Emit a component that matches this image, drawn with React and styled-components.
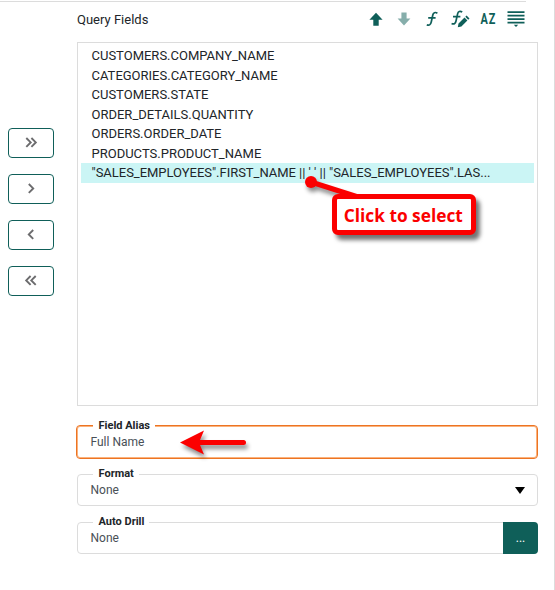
import React from "react";
import styled, { createGlobalStyle } from "styled-components";

const TEAL = "#0f5f59";
const LINE = "#dcdcdc";
const RED = "#fb0000";

const GlobalStyle = createGlobalStyle`
  * { box-sizing: border-box; }
  body { margin: 0; background: #fff; }
  button { font-family: inherit; padding: 0; }
`;

const Page = styled.main`
  position: relative;
  display: grid;
  grid-template-columns: 77px 461px;
  width: 555px;
  height: 590px;
  overflow: hidden;
  border-right: 1px solid ${LINE};
  font-family: Roboto, "Liberation Sans", sans-serif;
  font-size: 13px;
  color: #212529;
`;

const TopRule = styled.hr`
  position: absolute;
  top: 1px;
  left: 0;
  width: 526px;
  height: 1px;
  margin: 0;
  border: 0;
  background: ${LINE};
`;

const MoveColumn = styled.div`
  display: flex;
  flex-direction: column;
  gap: 16px;
  padding: 128px 0 0 8px;
`;

const MoveButton = styled.button`
  display: flex;
  align-items: center;
  justify-content: center;
  width: 46px;
  height: 30px;
  border: 1px solid ${TEAL};
  border-radius: 4px;
  background: #fff;
  color: #6c6c6e;
`;

const Panel = styled.section`
  display: flex;
  flex-direction: column;
`;

const Header = styled.header`
  display: flex;
  justify-content: space-between;
  height: 42px;
  padding: 9px 12px 0 0;
`;

const Title = styled.h1`
  margin: 0;
  padding-top: 1px;
  font-size: 13px;
  font-weight: 400;
  line-height: 20px;
`;

const Toolbar = styled.div`
  display: flex;
  gap: 8px;
`;

const Tool = styled.button`
  width: 20px;
  height: 20px;
  border: 0;
  background: none;
  color: ${TEAL};
  opacity: ${(p) => (p.$dim ? 0.5 : 1)};
  svg { display: block; overflow: visible; }
`;

const FieldList = styled.ul`
  height: 364px;
  margin: 0 0 20px;
  padding: 3px;
  border: 1px solid ${LINE};
  list-style: none;
`;

const FieldRow = styled.li`
  height: 19.5px;
  padding-left: 10.5px;
  line-height: 19.5px;
  white-space: pre;
  letter-spacing: ${(p) => (p.$selected ? "-0.025px" : "normal")};
  background: ${(p) => (p.$selected ? "#cbf5f5" : "transparent")};
`;

const Field = styled.div`
  position: relative;
  display: flex;
  align-items: center;
  justify-content: space-between;
  height: 32px;
  margin-bottom: 16px;
  border: 1px solid ${LINE};
  border-radius: 4px;
  padding-left: 12.5px;
  font-size: 12px;
  color: #495057;
  ${(p) => p.$focused && `
    height: 34px;
    margin: -1px 0 15px -1px;
    padding-left: 13.5px;
    border-color: #ec7423;
    box-shadow: inset 0 0 0 1px #fbb27c;
  `}
`;

const Label = styled.label`
  position: absolute;
  top: ${(p) => (p.$focused ? "-7px" : "-8px")};
  left: ${(p) => (p.$focused ? "16px" : "15px")};
  padding: 0 5px 0 5.5px;
  background: #fff;
  font-size: 11px;
  font-weight: 700;
  line-height: 14px;
  color: #212529;
`;

const Caret = styled.svg`
  margin-right: 12px;
`;

const MoreButton = styled.button`
  width: 35px;
  height: 32px;
  margin: 0 -1px;
  border: 0;
  border-radius: 0 4px 4px 0;
  background: ${TEAL};
  color: #fff;
  font-size: 12px;
`;

const Annotation = styled.svg`
  position: absolute;
  top: ${(p) => p.$top}px;
  left: ${(p) => p.$left}px;
  overflow: visible;
  filter: drop-shadow(2px 4px 2px rgba(0, 0, 0, 0.45));
`;

const Callout = styled.div`
  position: absolute;
  top: 194px;
  left: 332px;
  display: flex;
  align-items: center;
  justify-content: center;
  width: 144px;
  height: 41px;
  border: 5px solid ${RED};
  border-radius: 6px;
  background: #fff;
  box-shadow: 4px 5px 4px rgba(0, 0, 0, 0.55);
  color: ${RED};
  font: 700 18px "Open Sans", sans-serif;
  white-space: nowrap;
`;

const CalloutText = styled.span`
  transform: translate(-0.7px, -0.5px) scaleX(0.96);
`;

const chevrons = {
  allRight: "M-4.7-4.4L-.3 0l-4.4 4.4M.4-4.4L4.8 0 .4 4.4",
  right: "M-2.2-4.4L2.2 0l-4.4 4.4",
  left: "M2.2-4.4L-2.2 0l4.4 4.4",
  allLeft: "M-.4-4.4L-4.8 0l4.4 4.4M4.7-4.4L.3 0l4.4 4.4",
};

const Chevron = ({ d }) => (
  <svg width="14" height="12" viewBox="-7 -5.4 14 12">
    <path d={d} fill="none" stroke="currentColor" strokeWidth="1.9" />
  </svg>
);

const FunctionPath = () => (
  <path
    d="M15.4 4.2C13.2 2.8 11.3 3.6 10.8 6L9.2 13.2C8.7 15.9 7 16.8 4.8 15.7M6.2 8.9h7.4"
    fill="none"
    stroke="currentColor"
    strokeWidth="1.7"
  />
);

const Icon = ({ children }) => (
  <svg width="20" height="20" viewBox="0 0 20 20">{children}</svg>
);

const AZText = styled.text`
  font: 700 14px "Roboto", sans-serif;
  fill: currentColor;
`;

const rows = [
  "CUSTOMERS.COMPANY_NAME",
  "CATEGORIES.CATEGORY_NAME",
  "CUSTOMERS.STATE",
  "ORDER_DETAILS.QUANTITY",
  "ORDERS.ORDER_DATE",
  "PRODUCTS.PRODUCT_NAME",
  "\"SALES_EMPLOYEES\".FIRST_NAME || ' ' || \"SALES_EMPLOYEES\".LAS...",
];

export default function App() {
  return (
    <>
      <GlobalStyle />
      <Page>
        <TopRule />
        <MoveColumn>
          {Object.entries(chevrons).map(([name, d]) => (
            <MoveButton key={name} aria-label={name}><Chevron d={d} /></MoveButton>
          ))}
        </MoveColumn>
        <Panel>
          <Header>
            <Title>Query Fields</Title>
            <Toolbar>
              <Tool aria-label="Move up">
                <Icon><path d="M10 3.8l6.6 7h-3.9v6H7.3v-6H3.4z" fill="currentColor" /></Icon>
              </Tool>
              <Tool aria-label="Move down" $dim>
                <Icon><path d="M10 16.4l6.4-6.8h-3.8V3.6H7.4v6H3.6z" fill="currentColor" /></Icon>
              </Tool>
              <Tool aria-label="Function"><Icon><FunctionPath /></Icon></Tool>
              <Tool aria-label="Edit function">
                <Icon>
                  <g transform="translate(-3.2 -1.2)"><FunctionPath /></g>
                  <path d="M7.8 18.2l.7-3.6 6-6 2.9 2.9-6 6zM15.3 7.8l1.3-1.3 2.9 2.9-1.3 1.3z" fill="currentColor" />
                </Icon>
              </Tool>
              <Tool aria-label="Sort">
                <Icon>
                  <AZText transform="translate(2.6 15.2) scale(.78 1)" letterSpacing="1.2">AZ</AZText>
                </Icon>
              </Tool>
              <Tool aria-label="Collapse">
                <Icon>
                  <path d="M1.5 3.1h17M1.5 6.6h17M1.5 10.1h17M1.5 13.6h17" stroke="currentColor" strokeWidth="1.7" />
                  <path d="M7.8 15.8h4.4L10 18z" fill="currentColor" />
                </Icon>
              </Tool>
            </Toolbar>
          </Header>
          <FieldList>
            {rows.map((row, i) => <FieldRow key={row} $selected={i === 6}>{row}</FieldRow>)}
          </FieldList>
          <Field $focused><Label $focused>Field Alias</Label>Full Name</Field>
          <Field>
            <Label>Format</Label>None
            <Caret width="10" height="7"><path d="M0 0h10L5 7z" fill="#000" /></Caret>
          </Field>
          <Field><Label>Auto Drill</Label>None<MoreButton>...</MoreButton></Field>
        </Panel>
        <Annotation $top={170} $left={300} width="65" height="35">
          <path d="M11 12L58 27" stroke={RED} strokeWidth="5" />
          <circle cx="11" cy="12" r="6" fill={RED} />
        </Annotation>
        <Callout><CalloutText>Click to select</CalloutText></Callout>
        <Annotation $top={430} $left={179} width="68" height="26">
          <path d="M20 12.5H64.5" stroke={RED} strokeWidth="5" strokeLinecap="round" />
          <path d="M1 12.5L25 .5 20 12.5 25 24.5z" fill={RED} />
        </Annotation>
      </Page>
    </>
  );
}
